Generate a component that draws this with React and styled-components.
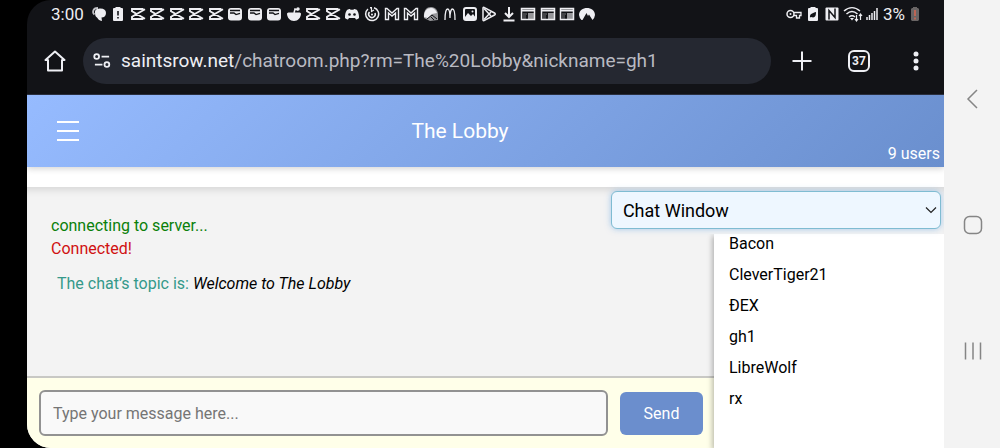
import React from "react";
import styled, { createGlobalStyle } from "styled-components";

const GlobalStyle = createGlobalStyle`
  * { box-sizing: border-box; }
  body { margin: 0; background: #000; font-family: Roboto, "Liberation Sans", sans-serif; }
  button, input, select { font-family: inherit; }
`;

const Screen = styled.div`
  display: flex;
  min-height: 100vh;
  padding-left: 27px;
  background: #000;
`;

const Device = styled.div`
  flex: 1;
  min-width: 0;
  display: flex;
  flex-direction: column;
  overflow: hidden;
  background: #121317;
  border-radius: 24px 0 0 24px;
`;

const StatusBar = styled.div`
  display: flex;
  align-items: center;
  justify-content: space-between;
  height: 28px;
  padding: 0 24px;
  color: #eeeef2;
`;

const StatusGroup = styled.div`
  display: flex;
  align-items: center;
  gap: ${(p) => p.$gap}px;
`;

const StatusText = styled.span`
  font-size: 17px;
  line-height: 20px;
`;

const Notifications = styled.div`
  display: flex;
  justify-content: space-between;
  width: 504px;
`;

const Glyph = styled.svg`
  display: block;
  flex: none;
  width: ${(p) => p.$w || 16}px;
  height: ${(p) => p.$h || p.$w || 16}px;
  fill: none;
  stroke: currentColor;
  stroke-width: ${(p) => p.$stroke || 1.5};
`;

const BrowserBar = styled.div`
  display: flex;
  align-items: center;
  height: 67px;
  padding: 0 17px;
  border-bottom: 1px solid #2b3040;
  color: #eeeff4;
`;

const IconButton = styled.button`
  display: grid;
  place-items: center;
  flex: none;
  width: ${(p) => p.$w || 22}px;
  height: ${(p) => p.$h || 22}px;
  padding: 0;
  border: 0;
  background: none;
  color: inherit;
`;

const AddressBar = styled.div`
  display: flex;
  align-items: center;
  flex: 1;
  min-width: 0;
  height: 46px;
  margin-left: 17px;
  padding: 0 10px;
  gap: 10px;
  border-radius: 23px;
  background: #252831;
`;

const Url = styled.div`
  font-size: 19px;
  line-height: 24px;
  color: #b9bac2;
  white-space: nowrap;
`;

const Host = styled.span`
  color: #eeeff4;
`;

const BrowserActions = styled.div`
  display: flex;
  align-items: center;
  gap: 35px;
  margin-left: 20px;
`;

const TabCount = styled.button`
  width: 22px;
  height: 22px;
  padding: 0;
  border: 2px solid #eeeff4;
  border-radius: 6px;
  background: none;
  color: #eeeff4;
  font-size: 12px;
  line-height: 18px;
  font-weight: 700;
`;

const Header = styled.header`
  position: relative;
  z-index: 1;
  display: flex;
  align-items: center;
  height: 72px;
  padding: 0 4px 0 30px;
  background: linear-gradient(135deg, #96bbff, #6a8fce);
  box-shadow: 0 2px 6px rgba(0, 0, 0, 0.16);
  color: #fff;
`;

const Title = styled.h1`
  flex: 1;
  margin: 0;
  font-size: 21px;
  line-height: 24px;
  font-weight: 400;
  text-align: center;
`;

const UserCount = styled.div`
  align-self: flex-end;
  width: 99px;
  padding-bottom: 3px;
  font-size: 16px;
  line-height: 20px;
  text-align: right;
`;

const Main = styled.main`
  position: relative;
  flex: 1;
  display: flex;
  border-top: 20px solid #fff;
  background: #f3f3f3;
  box-shadow: inset 0 8px 8px -6px rgba(0, 0, 0, 0.14);
`;

const Chat = styled.section`
  flex: 1;
  min-width: 0;
  display: flex;
  flex-direction: column;
`;

const Log = styled.div`
  flex: 1;
  padding: 27px 24px;
  font-size: 16px;
  line-height: 23px;
`;

const Message = styled.p`
  margin: 0;
  color: ${(p) => p.$color};
`;

const Topic = styled.p`
  margin: 12px 6px;
  color: #35998a;
`;

const TopicText = styled.em`
  color: #000;
`;

const Composer = styled.form`
  display: flex;
  align-items: center;
  gap: 12px;
  padding: 12px 11px 12px 12px;
  border-top: 2px solid #c8c8c4;
  background: #ffffe9;
`;

const MessageInput = styled.input`
  flex: 1;
  min-width: 0;
  height: 46px;
  padding: 0 12px;
  border: 2px solid #929292;
  border-radius: 6px;
  background: #f9f9f9;
  font-size: 16px;
  &::placeholder { color: #757575; }
`;

const SendButton = styled.button`
  width: 83px;
  height: 43px;
  padding: 0;
  border: 0;
  border-radius: 6px;
  background: #6b8ecd;
  color: #fff;
  font-size: 16px;
`;

const Sidebar = styled.aside`
  flex: none;
  width: 230px;
  margin-top: 47px;
  background: #fff;
  box-shadow: -2px 2px 5px rgba(0, 0, 0, 0.25);
  clip-path: inset(0 0 0 -10px);
`;

const UserList = styled.ul`
  margin: 0;
  padding: 0 15px;
  list-style: none;
  font-size: 16px;
  line-height: 19px;
`;

const User = styled.li`
  padding-bottom: 12px;
  color: #000;
`;

const WindowPicker = styled.div`
  position: absolute;
  top: 4px;
  right: 3px;
  width: 36%;
  color: #222;
`;

const WindowSelect = styled.select`
  display: block;
  width: 100%;
  height: 38px;
  padding: 0 11px;
  appearance: none;
  border: 1px solid #7fbcd2;
  border-radius: 6px;
  background: #eef7ff;
  box-shadow: 0 0 6px rgba(130, 180, 230, 0.7);
  color: #000;
  font-size: 18px;
`;

const Chevron = styled(Glyph)`
  position: absolute;
  top: 13px;
  right: 4px;
  pointer-events: none;
`;

const NavRail = styled.nav`
  display: flex;
  flex-direction: column;
  align-items: center;
  justify-content: space-between;
  width: 56px;
  padding: 88px 0 86px 2px;
  background: #f3f3f3;
  color: #858585;
`;

const shapes = {
  chat: <><path d="M4 6c0-3 3-3.500 5.500-3.500C13 2.500 15 4 15 7s-2 4.500-4.500 4.500L11 15c-3-.5-4-2-5-3.500C4.500 11 4 9 4 6Z" fill="currentColor" stroke="none" /><path d="M3.500 8.500C1.500 7 1 2 7 2" strokeWidth="1.800" opacity=".8" /></>,
  battery: <><path d="M5.500 1h5v1H12q1 0 1 1v11q0 1-1 1H4q-1 0-1-1V3q0-1 1-1h1.500Z" fill="currentColor" stroke="none" /><path d="M8 5v4.500M8 11v1.500" stroke="#121317" strokeWidth="1.600" /></>,
  cut: <path d="M12.500 3H2v2.300L15 12.800M12.500 13H2v-2.300L15 3.200M12.500 2v3M12.500 14v-3" strokeWidth="1.900" />,
  wallet: <><rect x="1" y="2" width="14" height="12.500" rx="3" fill="currentColor" stroke="none" /><path d="M3 4.500h10M3 7h4l2 1.500L13 7.300" stroke="#121317" strokeWidth="1.300" /></>,
  reddit: <><path d="M1 7.500c1-1.500 2-1 3-1h8c1 0 2-.5 3 1 0 4-3 7.500-7 7.500S1 11.500 1 7.500Z" fill="currentColor" stroke="none" /><path d="m8 7 1-4 3 1" /><circle cx="12" cy="3" r="1" fill="currentColor" /></>,
  discord: <><path d="M3 4c2-1.300 3-1 3-1l.5.8h3L10 3s2 0 3 1c2 3 2 6 2 8-1 1-3 1.500-3 1.500L11 12H5l-1 1.500S2 13 1 12c0-3 0-5 2-8Z" fill="currentColor" stroke="none" /><circle cx="5.500" cy="8.500" r="1.300" fill="#121317" stroke="none" /><circle cx="10.500" cy="8.500" r="1.300" fill="#121317" stroke="none" /></>,
  orbit: <><path d="M4 3A6.500 6.500 0 1 0 10 1.800M6 1.800h2" /><path d="M5.500 6a3.300 3.300 0 1 0 5.500 1" /><path d="M7.500 2v3.500L10 4" strokeWidth="1.200" /><circle cx="8" cy="8.500" r="1" fill="currentColor" stroke="none" /></>,
  mail: <path d="M1.500 13.500v-11H3L8 7l5-4.500h1.500v11h-3V7L8 10 4.500 7v6.500Z" strokeWidth="1.400" />,
  bell: <><path d="M1 12C0 4 4 1 8 1c5 0 7 4 7 8v5l-8 1Z" fill="currentColor" stroke="none" opacity=".6" /><path d="M1 11C1 5 4 2 8 2c3 0 5 2 6 5L9 8l-4 4Z" fill="currentColor" stroke="none" /><path d="m4 13 5-4 5 4M8 11l3 3" stroke="#121317" strokeWidth="1" /></>,
  arches: <path d="M3 14C3 7 4 3 5.500 3S8 7 8 12c0-5 1-9 2.500-9S13 7 13 14" strokeWidth="1.300" />,
  image: <><rect x="2" y="2" width="12" height="12" rx="2" strokeWidth="2" /><path d="m3 11 3-4 3 3 2-2 3 4v2H3Z" fill="currentColor" stroke="none" /><circle cx="10.500" cy="5.500" r="1" fill="currentColor" stroke="none" /></>,
  play: <><path d="M2 2c0-1 1-.8 1.500-.4l10 5.400c1 .6 1 1.400 0 2l-10 5.400C3 14.800 2 15 2 14Z" /><path d="m3 2.500 7 7.500M3 13.500 10 6" /></>,
  download: <path d="M8 1v9M4 7l4 4 4-4M2.500 14.500h11" strokeWidth="2" />,
  news: <><rect x="1.500" y="2.500" width="13" height="11" /><path d="M1 4.500h14" strokeWidth="2" /><path d="M3 8h4M3 10h3M3 12h3" opacity=".3" /><path d="M8 7h6v6H8Z" fill="currentColor" stroke="none" opacity=".6" /></>,
  peak: <path d="M2.500 14A8 8 0 0 1 0 9c0-9.500 16-9.500 16 0a8 8 0 0 1-2.500 5L10 8.500 9 10 7.500 7 3.500 14Z" fill="currentColor" stroke="none" />,
};

const notifications = [
  "chat", "battery", "cut", "cut", "cut", "cut", "cut", "wallet", "wallet",
  "wallet", "reddit", "cut", "cut", "discord", "orbit", "mail", "mail", "bell",
  "arches", "image", "play", "download", "news", "news", "news", "peak",
];

const users = ["Bacon", "CleverTiger21", "ĐEX", "gh1", "LibreWolf", "rx"];

function SystemIcons() {
  return (
    <StatusGroup $gap={3}>
      <Glyph viewBox="0 0 16 16">
        <circle cx="4.500" cy="8" r="3.500" />
        <circle cx="4.500" cy="8" r="1" fill="currentColor" stroke="none" />
        <path d="M7.500 6.500H15v3h-1.500V12h-3V9.500h-3" strokeWidth="1.300" />
      </Glyph>
      <Glyph viewBox="0 0 16 16">
        <path d="M5.500 1h5v1H12q1 0 1 1v11q0 1-1 1H4q-1 0-1-1V3q0-1 1-1h1.500Z" fill="currentColor" stroke="none" />
        <path d="M5 11.500c-.5-4 3-4.500 6-5.500 0 4-1 6.500-5 5Z" fill="#121317" stroke="none" />
      </Glyph>
      <Glyph viewBox="0 0 16 16">
        <rect x="1.500" y="1.500" width="13" height="13" rx="1" fill="currentColor" stroke="none" />
        <path d="M5 13.500V4.500l6 7V2.500" stroke="#121317" />
      </Glyph>
      <Glyph viewBox="0 0 20 16" $w={20} $h={16}>
        <path d="M1 5c5-4.500 11-4.500 16 0M3.500 8c3.500-3.200 7.500-3.200 11 0M6 11c2-1.700 4-1.700 6 0" />
        <path d="m7 12 2 2.500L11 12Z" fill="currentColor" stroke="none" />
        <path d="M13.500 9v6M12 13l1.500 2 1.500-2M17.500 14V8M16 10l1.500-2L19 10" strokeWidth="1.200" />
      </Glyph>
      <Glyph viewBox="0 0 12 16" $w={12} $h={16}>
        <path d="M1 14v-3M3.500 14V9M6 14V7M8.500 14V5M11 14V2" />
      </Glyph>
    </StatusGroup>
  );
}

export default function App() {
  return (
    <>
      <GlobalStyle />
      <Screen>
        <Device>
          <StatusBar>
            <StatusGroup $gap={7}>
              <StatusText>3:00</StatusText>
              <Notifications>
                {notifications.map((name, i) => (
                  <Glyph key={i} viewBox="0 0 16 16">{shapes[name]}</Glyph>
                ))}
              </Notifications>
            </StatusGroup>
            <StatusGroup $gap={5}>
              <SystemIcons />
              <StatusText>3%</StatusText>
              <Glyph viewBox="0 0 10 16" $w={10} $h={16}>
                <path d="M3 1h4v1h1l1 1v11l-1 1H2l-1-1V3l1-1h1Z" fill="#696565" stroke="none" />
                <path d="M5 4v6M5 11.500v2" stroke="#d9654f" />
              </Glyph>
            </StatusGroup>
          </StatusBar>

          <BrowserBar>
            <IconButton aria-label="Home">
              <Glyph viewBox="0 0 22 22" $w={22} $stroke={2}>
                <path d="M11 1.500 1.500 10H4v10.500h14V10h2.500Z" strokeLinejoin="round" />
              </Glyph>
            </IconButton>
            <AddressBar>
              <Glyph viewBox="0 0 20 18" $w={18} $h={16} $stroke={2}>
                <circle cx="4" cy="4" r="2.700" />
                <path d="M9.500 4H18M2 13h8.500" />
                <circle cx="15.500" cy="13" r="2.700" />
              </Glyph>
              <Url><Host>saintsrow.net</Host>/chatroom.php?rm=The%20Lobby&amp;nickname=gh1</Url>
            </AddressBar>
            <BrowserActions>
              <IconButton aria-label="New tab">
                <Glyph viewBox="0 0 22 22" $w={22} $stroke={2}><path d="M11 1.500v19M1.500 11h19" /></Glyph>
              </IconButton>
              <TabCount aria-label="37 open tabs">37</TabCount>
              <IconButton aria-label="More options">
                <Glyph viewBox="0 0 22 22" $w={22}>
                  <g fill="currentColor" stroke="none">
                    <circle cx="11" cy="4" r="2.500" /><circle cx="11" cy="11" r="2.500" /><circle cx="11" cy="18" r="2.500" />
                  </g>
                </Glyph>
              </IconButton>
            </BrowserActions>
          </BrowserBar>

          <Header>
            <IconButton aria-label="Menu">
              <Glyph viewBox="0 0 22 22" $w={22} $stroke={2}><path d="M0 2h22M0 11h22M0 20h22" /></Glyph>
            </IconButton>
            <Title>The Lobby</Title>
            <UserCount>9 users</UserCount>
          </Header>

          <Main>
            <Chat>
              <Log>
                <Message $color="#0a800a">connecting to server...</Message>
                <Message $color="#d01010">Connected!</Message>
                <Topic>The chat’s topic is: <TopicText>Welcome to The Lobby</TopicText></Topic>
              </Log>
              <Composer onSubmit={(e) => e.preventDefault()}>
                <MessageInput aria-label="Message" placeholder="Type your message here..." />
                <SendButton type="submit">Send</SendButton>
              </Composer>
            </Chat>
            <Sidebar>
              <UserList>
                {users.map((name) => <User key={name}>{name}</User>)}
              </UserList>
            </Sidebar>
            <WindowPicker>
              <WindowSelect aria-label="Window" defaultValue="Chat Window">
                <option>Chat Window</option>
              </WindowSelect>
              <Chevron viewBox="0 0 12 12" $w={12}><path d="m1 3.500 5 5 5-5" strokeWidth="1.200" /></Chevron>
            </WindowPicker>
          </Main>
        </Device>

        <NavRail aria-label="System navigation">
          <IconButton aria-label="Back">
            <Glyph viewBox="0 0 22 22" $w={22}><path d="m15 2-9 9 9 9" /></Glyph>
          </IconButton>
          <IconButton aria-label="Home screen">
            <Glyph viewBox="0 0 22 22" $w={22}><rect x="2.500" y="2.500" width="17" height="17" rx="5" /></Glyph>
          </IconButton>
          <IconButton aria-label="Recent apps">
            <Glyph viewBox="0 0 22 22" $w={22}><path d="M3.500 2.500v17M11 2.500v17M18.500 2.500v17" /></Glyph>
          </IconButton>
        </NavRail>
      </Screen>
    </>
  );
}
